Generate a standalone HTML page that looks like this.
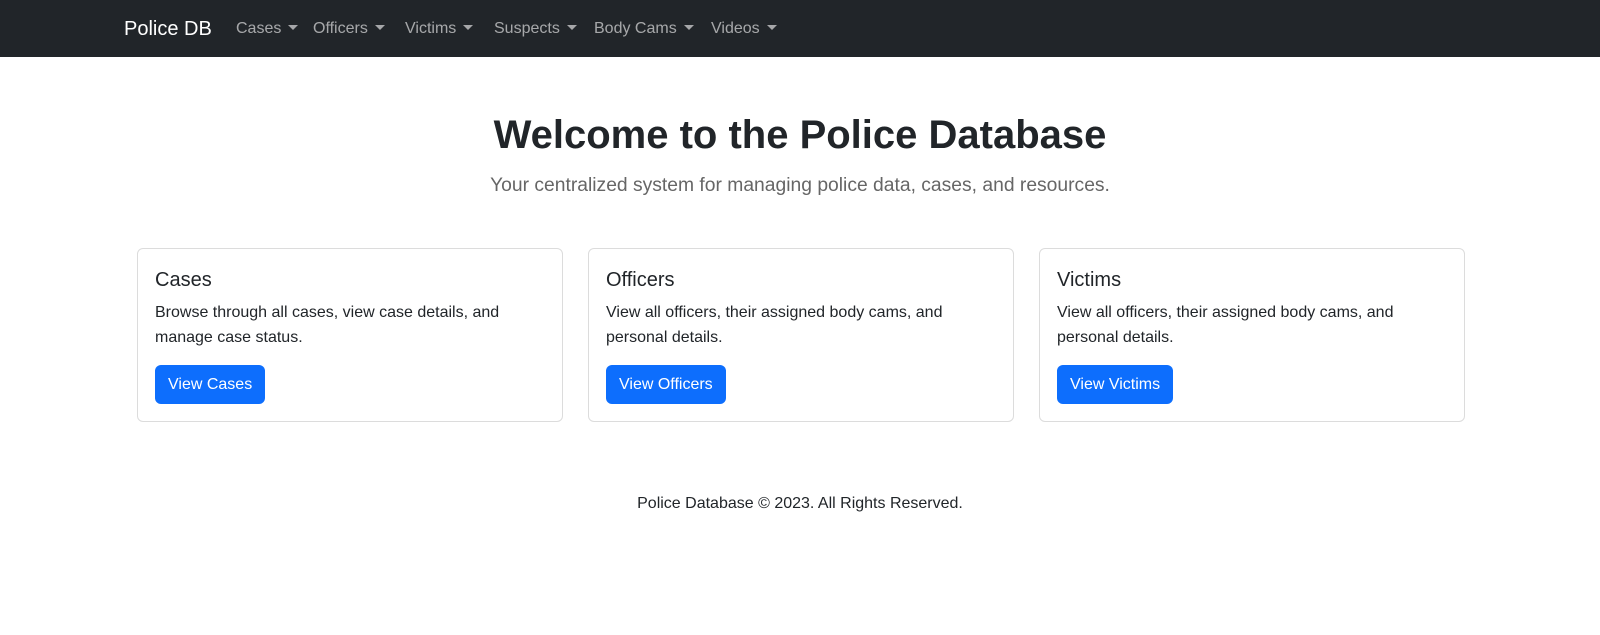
<!DOCTYPE html>
<html><head><meta charset="utf-8"><style>
*{box-sizing:border-box;margin:0;padding:0}
body{width:1600px;height:635px;background:#fff;font-family:"Liberation Sans",sans-serif;color:#212529;position:relative;overflow:hidden}
nav{position:absolute;left:0;top:0;width:1600px;height:57px;background:#212529}
.brand{position:absolute;left:124px;top:17px;font-size:20px;color:#fff;line-height:24px}
.item{position:absolute;top:19px;font-size:16px;line-height:20px;color:rgba(255,255,255,.6);white-space:nowrap}
.item:after{content:"";display:inline-block;margin-left:7px;vertical-align:3px;border-top:5px solid rgba(255,255,255,.6);border-left:5px solid transparent;border-right:5px solid transparent}
h1{position:absolute;left:0;width:1600px;top:111px;text-align:center;font-size:40px;font-weight:bold;line-height:48px;color:#212529}
.lead{position:absolute;left:0;width:1600px;top:173px;text-align:center;font-size:19.3px;font-weight:300;color:#666;line-height:26px}
.card{position:absolute;top:248px;width:426px;height:174px;border:1px solid #dcdcdc;border-radius:6px;padding:18px 17px}
.card h5{font-size:20px;font-weight:500;line-height:24px;margin-top:1px;margin-bottom:8px}
.card p{font-size:16px;line-height:25px;color:#212529;margin-bottom:15px}
.btn{display:inline-block;background:#0d6efd;color:#fff;font-size:16px;border-radius:6px;padding:0 13px;height:39px;line-height:39px}
.foot{position:absolute;left:0;width:1600px;top:494px;text-align:center;font-size:16px;line-height:20px}
</style></head><body>
<nav>
<div class="brand">Police DB</div>
<div class="item" style="left:236px">Cases</div>
<div class="item" style="left:313px">Officers</div>
<div class="item" style="left:405px">Victims</div>
<div class="item" style="left:494px">Suspects</div>
<div class="item" style="left:594px">Body Cams</div>
<div class="item" style="left:711px">Videos</div>
</nav>
<h1>Welcome to the Police Database</h1>
<div class="lead">Your centralized system for managing police data, cases, and resources.</div>
<div class="card" style="left:137px"><h5>Cases</h5><p>Browse through all cases, view case details, and manage case status.</p><span class="btn">View Cases</span></div>
<div class="card" style="left:588px"><h5>Officers</h5><p>View all officers, their assigned body cams, and personal details.</p><span class="btn">View Officers</span></div>
<div class="card" style="left:1039px"><h5>Victims</h5><p>View all officers, their assigned body cams, and personal details.</p><span class="btn">View Victims</span></div>
<div class="foot">Police Database © 2023. All Rights Reserved.</div>
</body></html>
